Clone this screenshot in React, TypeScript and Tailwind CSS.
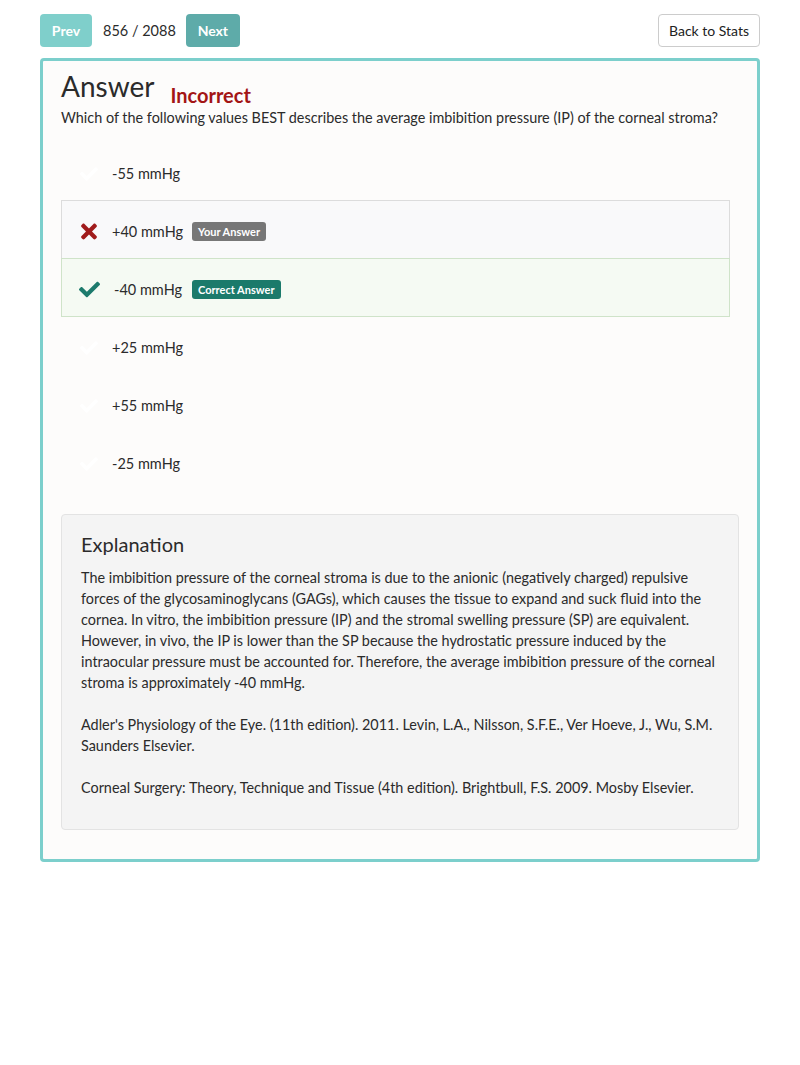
import { FaCheck, FaTimes } from "react-icons/fa";

type Option = {
  label: string;
  state: "none" | "wrong" | "correct";
};

const OPTIONS: Option[] = [
  { label: "-55 mmHg", state: "none" },
  { label: "+40 mmHg", state: "wrong" },
  { label: "-40 mmHg", state: "correct" },
  { label: "+25 mmHg", state: "none" },
  { label: "+55 mmHg", state: "none" },
  { label: "-25 mmHg", state: "none" },
];

function OptionRow({ opt }: { opt: Option }) {
  const rowClass =
    opt.state === "wrong"
      ? "bg-[#f9f9fa] border-[#dcdcdc]"
      : opt.state === "correct"
      ? "bg-[#f5faf3] border-[#cfe3c9]"
      : "bg-transparent border-transparent";

  return (
    <div className={`-mt-px flex h-[59px] items-center border pl-[16px] pt-[4px] ${rowClass}`}>
      <div className="flex w-[22px] justify-center">
        {opt.state === "wrong" ? (
          <FaTimes className="h-[23px] w-[16px] text-[#a01b1b]" />
        ) : opt.state === "correct" ? (
          <FaCheck className="h-[21px] w-[21px] text-[#1c7a6c]" />
        ) : (
          <FaCheck className="h-[18px] w-[18px] text-white" />
        )}
      </div>
      <span className={`text-[14.5px] text-[#2b2b2b] ${opt.state === "correct" ? "ml-[14px]" : "ml-[12px]"}`}>{opt.label}</span>
      {opt.state === "wrong" && (
        <span className="ml-[9px] rounded-[3px] bg-[#777777] px-[6px] py-[3px] text-[11px] font-bold leading-[13px] text-white">
          Your Answer
        </span>
      )}
      {opt.state === "correct" && (
        <span className="ml-[10px] rounded-[3px] bg-[#1b7a6b] px-[6px] py-[3px] text-[11px] font-bold leading-[13px] text-white">
          Correct Answer
        </span>
      )}
    </div>
  );
}

export default function App() {
  return (
    <div className="min-h-[1065px] bg-white px-10 pt-[14px] text-[#2b2b2b] [font-family:Lato,'Open_Sans',sans-serif]">
      {/* Navegación */}
      <div className="flex items-center justify-between">
        <div className="flex items-center">
          <button className="h-[33px] w-[52px] rounded-[4px] bg-[#7fcfcb] text-[14px] font-bold text-white">
            Prev
          </button>
          <span className="ml-[11px] text-[14.5px] text-[#2b2b2b]">856 / 2088</span>
          <button className="ml-[10px] h-[33px] w-[54px] rounded-[4px] bg-[#5eaba9] text-[14px] font-bold text-white">
            Next
          </button>
        </div>
        <button className="h-[33px] w-[102px] rounded-[4px] border border-[#cccccc] bg-white text-[14px] text-[#222]">
          Back to Stats
        </button>
      </div>

      {/* Tarjeta */}
      <div className="mt-[11px] rounded-[4px] border-[3px] border-[#7ccfcc] bg-[#fdfcfb] px-[18px] pb-[29px] pt-[8px]">
        <div className="flex items-end">
          <h1 className="text-[28px] leading-[34px] text-[#2b2b2b]">Answer</h1>
          <span className="-mb-[4px] ml-[16px] text-[20px] font-bold leading-[24px] text-[#a31515]">Incorrect</span>
        </div>
        <p className="mt-[4px] text-[14.4px] leading-[21px]">
          Which of the following values BEST describes the average imbibition pressure (IP) of the corneal stroma?
        </p>

        <div className="mr-[9px] mt-[15px]">
          {OPTIONS.map((opt) => (
            <OptionRow key={opt.label} opt={opt} />
          ))}
        </div>

        <div className="mt-[23px] rounded-[4px] border border-[#e3e3e3] bg-[#f4f4f4] px-[19px] pb-[10px] pt-[17px] text-[14.4px] leading-[21px] text-[#2b2b2b]">
          <h2 className="mb-[11px] text-[20px] leading-[24px]">Explanation</h2>
          <p className="mb-[21px]">
            The imbibition pressure of the corneal stroma is due to the anionic (negatively charged) repulsive forces of
            the glycosaminoglycans (GAGs), which causes the tissue to expand and suck fluid into the cornea. In vitro,
            the imbibition pressure (IP) and the stromal swelling pressure (SP) are equivalent. However, in vivo, the IP
            is lower than the SP because the hydrostatic pressure induced by the intraocular pressure must be accounted
            for. Therefore, the average imbibition pressure of the corneal stroma is approximately -40 mmHg.
          </p>
          <p className="mb-[21px]">
            Adler's Physiology of the Eye. (11th edition). 2011. Levin, L.A., Nilsson, S.F.E., Ver Hoeve, J., Wu, S.M.
            Saunders Elsevier.
          </p>
          <p className="mb-[21px]">
            Corneal Surgery: Theory, Technique and Tissue (4th edition). Brightbull, F.S. 2009. Mosby Elsevier.
          </p>
        </div>
      </div>
    </div>
  );
}
